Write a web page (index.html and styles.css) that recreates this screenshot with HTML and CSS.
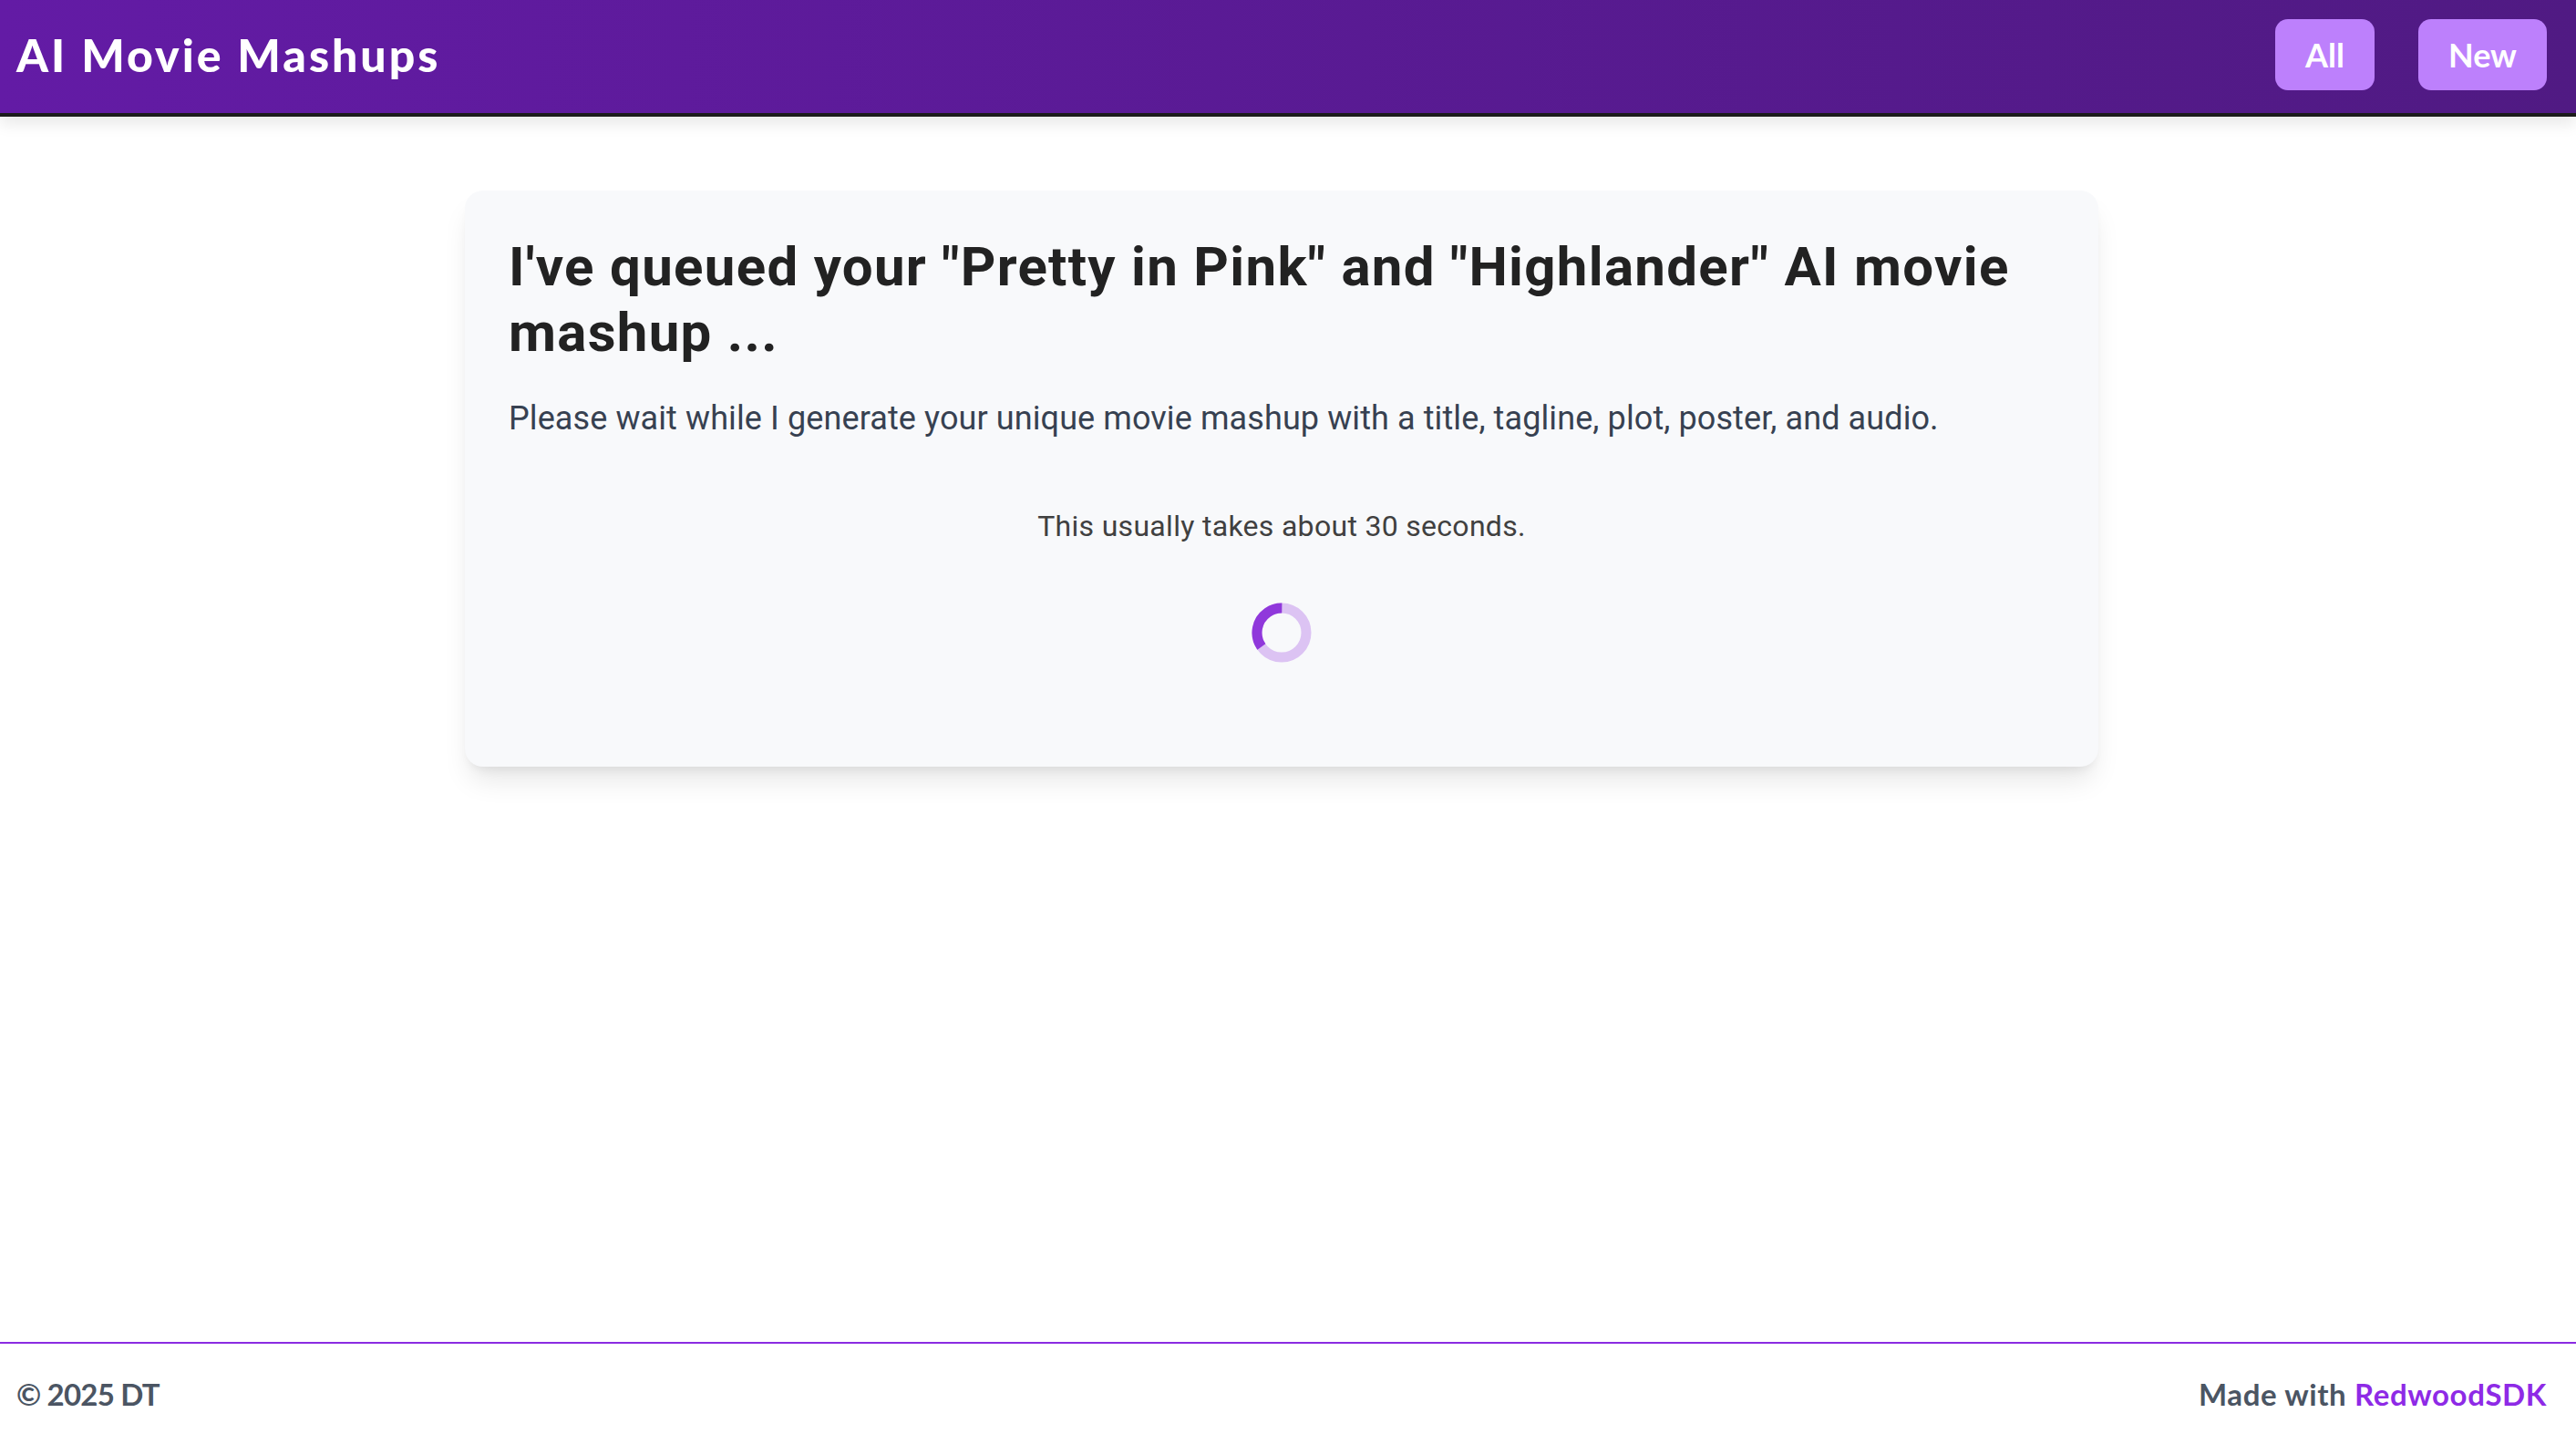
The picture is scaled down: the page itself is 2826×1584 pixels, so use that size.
FILE: index.html
```html
<!DOCTYPE html>
<html lang="en">
<head>
<meta charset="utf-8">
<title>AI Movie Mashups</title>
<link rel="stylesheet" href="styles.css">
</head>
<body>
<div class="page">
  <header class="site-header">
    <a class="brand" href="#">AI Movie Mashups</a>
    <nav class="nav">
      <a class="nav-btn" href="#">All</a>
      <a class="nav-btn" href="#">New</a>
    </nav>
  </header>
  <main class="main">
    <section class="card">
      <h1 class="card-title">I've queued your "Pretty in Pink" and "Highlander" AI movie mashup ...</h1>
      <p class="card-lead">Please wait while I generate your unique movie mashup with a title, tagline, plot, poster, and audio.</p>
      <div class="status">
        <p class="status-text">This usually takes about 30 seconds.</p>
        <svg class="spinner" width="66" height="66" viewBox="0 0 66 66" aria-hidden="true">
          <circle cx="33" cy="33" r="27" fill="none" stroke="#dcc3f3" stroke-width="11"/>
          <circle cx="33" cy="33" r="27" fill="none" stroke="#9038db" stroke-width="11" stroke-dasharray="59 200" transform="rotate(145 33 33)"/>
        </svg>
      </div>
    </section>
  </main>
  <footer class="site-footer">
    <span class="copy">© 2025 DT</span>
    <span class="made">Made with <a class="made-link" href="#">RedwoodSDK</a></span>
  </footer>
</div>
</body>
</html>
```

FILE: styles.css
```css
* { box-sizing: border-box; }
html, body { margin: 0; padding: 0; }
body {
  background: #ffffff;
  font-family: Roboto, Inter, "Noto Sans", sans-serif;
  color: #222;
}
.page {
  min-height: 100vh;
  display: flex;
  flex-direction: column;
}
.site-header {
  height: 128px;
  display: flex;
  align-items: center;
  justify-content: space-between;
  padding: 0 32px 4px 16px;
  background: linear-gradient(to right, #631ba5, #501a83);
  border-bottom: 4px solid #1b1b1b;
  box-shadow: 0 8px 16px rgba(0, 0, 0, 0.09);
  position: relative;
  z-index: 1;
}
.brand {
  font-family: Lato, "Noto Sans", sans-serif;
  font-weight: 900;
  font-size: 50px;
  color: #ffffff;
  text-decoration: none;
  letter-spacing: 3px;
  padding-left: 2px;
}
.nav {
  display: flex;
  gap: 48px;
  align-items: center;
}
.nav-btn {
  display: flex;
  align-items: center;
  justify-content: center;
  height: 78px;
  padding: 0 33px;
  border-radius: 14px;
  background: #bd80fc;
  color: #ffffff;
  font-family: Lato, "Noto Sans", sans-serif;
  font-weight: 700;
  font-size: 36px;
  text-decoration: none;
}
.main {
  flex: 1;
  padding: 81px 14px 80px 0;
}
.card {
  width: 1792px;
  margin: 0 auto;
  padding: 48px;
  background: #f8f9fb;
  border-radius: 20px;
  box-shadow: 0 20px 30px -6px rgba(0, 0, 0, 0.1), 0 8px 12px -6px rgba(0, 0, 0, 0.08);
}
.card-title {
  margin: 0 0 30px;
  font-size: 60px;
  line-height: 72px;
  font-weight: 700;
  color: #222222;
  letter-spacing: 1.3px;
}
.card-lead {
  margin: 0;
  font-size: 36px;
  line-height: 56px;
  color: #374151;
  letter-spacing: 0.1px;
}
.status {
  text-align: center;
  padding: 66px 0;
}
.status-text {
  margin: 0;
  font-size: 32px;
  line-height: 48px;
  color: #404040;
  letter-spacing: 0.3px;
}
.spinner {
  display: block;
  margin: 60px auto 0;
}
.site-footer {
  height: 112px;
  border-top: 2px solid #8a2be2;
  display: flex;
  align-items: center;
  justify-content: space-between;
  padding: 0 32px 0 18px;
  font-family: Lato, "Noto Sans", sans-serif;
  font-weight: 700;
  font-size: 33px;
  color: #4b5563;
}
.copy {
  letter-spacing: -0.8px;
}
.made {
  letter-spacing: 0.6px;
}
.made-link {
  color: #8e2ae6;
  text-decoration: none;
}
```
